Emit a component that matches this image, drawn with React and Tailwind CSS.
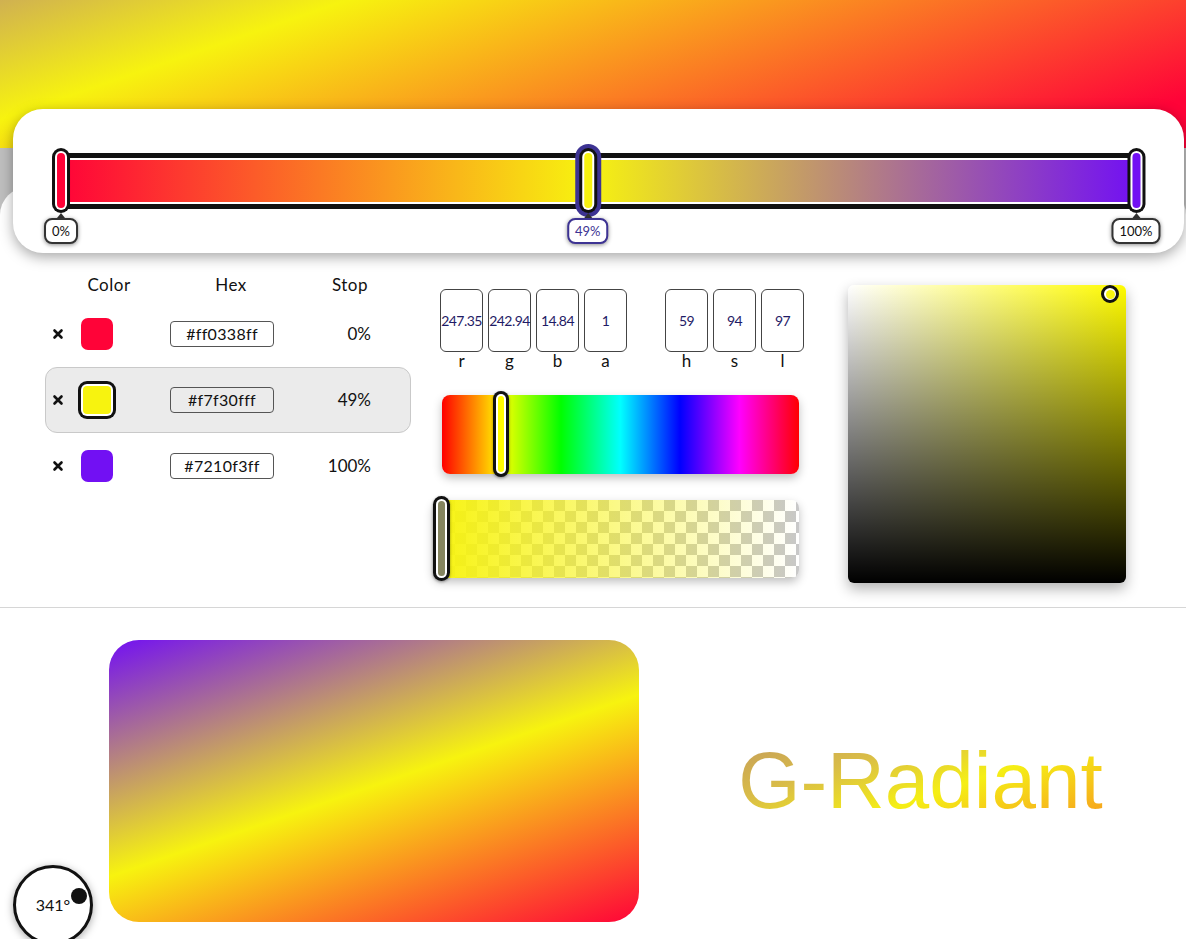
import React from 'react';

const stops = [
  { id: 1, pos: 0, hex: '#ff0338ff', fill: 'bg-[#ff0338]' },
  { id: 2, pos: 49, hex: '#f7f30fff', fill: 'bg-[#f7f30f]', selected: true },
  { id: 3, pos: 100, hex: '#7210f3ff', fill: 'bg-[#7210f3]' },
];

const rgba = [
  { label: 'r', value: '247.35' },
  { label: 'g', value: '242.94' },
  { label: 'b', value: '14.84' },
  { label: 'a', value: '1' },
];

const hsl = [
  { label: 'h', value: '59' },
  { label: 's', value: '94' },
  { label: 'l', value: '97' },
];

function Cross() {
  return (
    <svg width="12" height="12" viewBox="0 0 12 12">
      <path d="M2.5 2.5L9.5 9.5M9.5 2.5L2.5 9.5" stroke="#111" strokeWidth="2.6" strokeLinecap="round" />
    </svg>
  );
}

function StopHandle({ stop }) {
  const sel = stop.selected;
  return (
    <div
      className="absolute top-0 flex -translate-x-1/2 flex-col items-center"
      style={{ left: `${stop.pos}%` }}
    >
      <div
        className={`h-[65px] w-[18px] rounded-full bg-[#111] p-[3px] ${
          sel ? 'ring-4 ring-[#3d3393]' : ''
        }`}
      >
        <div className="h-full w-full rounded-full bg-white p-[2px]">
          <div className={`h-full w-full rounded-full ${stop.fill}`} />
        </div>
      </div>
      <div className="h-0 w-0 border-x-[4px] border-b-[5px] border-x-transparent border-b-[#333]" />
      <div
        className={`rounded-[8px] border-2 bg-white px-[6px] py-[3px] text-[13px] leading-[16px] shadow-[0_1px_4px_rgba(0,0,0,0.45)] ${
          sel ? 'border-[#3d3393] text-[#3d3393]' : 'border-[#333] text-[#111]'
        }`}
      >
        {stop.pos}%
      </div>
    </div>
  );
}

function ValueBox({ item }) {
  return (
    <div className="flex flex-col items-center">
      <div className="flex h-[63px] w-[43px] items-center justify-center rounded-[6px] border border-[#444] bg-white text-[14px] tracking-[-0.04em] text-[#1f1b66]">
        {item.value}
      </div>
      <span className="text-[17px] leading-[17px] text-[#111]">{item.label}</span>
    </div>
  );
}

function SliderHandle({ fill, className }) {
  return (
    <div className={`absolute rounded-full bg-[#111] p-[3px] shadow-[0_1px_3px_rgba(0,0,0,0.4)] ${className}`}>
      <div className="h-full w-full rounded-full bg-white p-[2px]">
        <div className={`h-full w-full rounded-full ${fill}`} />
      </div>
    </div>
  );
}

export default function App() {
  return (
    <div className="relative flex h-[939px] flex-col overflow-hidden bg-[#bfbfbf] font-['Lato',sans-serif] text-[#111]">
      {/* header gradient */}
      <div className="h-[148px] shrink-0 bg-[linear-gradient(341deg,#ff0338_9%,#f7f30f_78.5%,#d0b151_100%)]" />

      {/* gradient stops card */}
      <div className="absolute left-[13px] top-[109px] z-10 h-[144px] w-[1171px] rounded-[30px] bg-white shadow-[0_4px_14px_rgba(0,0,0,0.35)]">
        <div className="relative ml-[48px] mt-[39px] h-[65px] w-[1075px]">
          <div className="flex h-full items-center">
            <div className="h-[56px] w-full border-y-[5px] border-[#111] bg-white py-[2px]">
              <div className="h-full w-full bg-[linear-gradient(90deg,#ff0338_0%,#f7f30f_49%,#7210f3_100%)]" />
            </div>
          </div>
          {stops.map((s) => (
            <StopHandle key={s.id} stop={s} />
          ))}
        </div>
      </div>

      <main className="mt-[39px] flex-1 rounded-t-[28px] bg-white">
        {/* editor */}
        <section className="flex h-[421px] items-start border-b border-[#d6d6d6] pt-[86px]">
          {/* stops table */}
          <div className="ml-[45px] w-[366px]">
            <div className="flex h-[24px] items-center text-[17px] tracking-[0.03em]">
              <span className="ml-[19px] w-[90px] text-center">Color</span>
              <span className="w-[154px] text-center">Hex</span>
              <span className="w-[84px] text-center">Stop</span>
            </div>
            <div className="mt-[4px]">
              {stops.map((s) => (
                <div
                  key={s.id}
                  className={`flex h-[66px] items-center rounded-[12px] border ${
                    s.selected ? 'border-[#c9c9c9] bg-[#ebebeb]' : 'border-transparent'
                  }`}
                >
                  <div className="flex w-[26px] pl-[6px]">
                    <Cross />
                  </div>
                  <div className="flex w-[50px] justify-center">
                    {s.selected ? (
                      <div className="h-[38px] w-[38px] rounded-[9px] bg-[#111] p-[3px]">
                        <div className="h-full w-full rounded-[6px] bg-white p-[2px]">
                          <div className={`h-full w-full rounded-[4px] ${s.fill}`} />
                        </div>
                      </div>
                    ) : (
                      <div className={`h-[32px] w-[32px] rounded-[7px] ${s.fill}`} />
                    )}
                  </div>
                  <div className="flex w-[200px] justify-center">
                    <div className="flex h-[26px] w-[104px] items-center justify-center rounded-[4px] border border-[#555] text-[16px] tracking-[0.02em]">
                      {s.hex}
                    </div>
                  </div>
                  <div className="w-[49px] text-right text-[17px]">{s.pos}%</div>
                </div>
              ))}
            </div>
          </div>

          {/* values + sliders */}
          <div className="ml-[22px] mt-[16px] w-[369px]">
            <div className="flex pl-[7px]">
              <div className="flex gap-[5px]">
                {rgba.map((item) => (
                  <ValueBox key={item.label} item={item} />
                ))}
              </div>
              <div className="ml-[38px] flex gap-[5px]">
                {hsl.map((item) => (
                  <ValueBox key={item.label} item={item} />
                ))}
              </div>
            </div>

            <div className="relative ml-[9px] mt-[26px] h-[79px] w-[357px] rounded-[8px] bg-[linear-gradient(90deg,#f00,#ff0_16.67%,#0f0_33.33%,#0ff_50%,#00f_66.67%,#f0f_83.33%,#f00)] shadow-[0_4px_10px_rgba(0,0,0,0.25)]">
              <SliderHandle fill="bg-[#fffb00]" className="left-[51px] top-[-4px] h-[86px] w-[16px]" />
            </div>

            <div className="relative mt-[26px] h-[78px] w-[366px] rounded-[8px] bg-[conic-gradient(#c8c8c8_90deg,#fff_90deg_180deg,#c8c8c8_180deg_270deg,#fff_270deg)] bg-[length:22px_22px] shadow-[0_4px_10px_rgba(0,0,0,0.25)]">
              <div className="h-full w-full rounded-[8px] bg-[linear-gradient(90deg,rgba(247,243,15,1),rgba(247,243,15,0))]" />
              <SliderHandle fill="bg-[#85855f]" className="left-0 top-[-4px] h-[85px] w-[17px]" />
            </div>
          </div>

          {/* saturation / lightness */}
          <div className="relative ml-[46px] mt-[12px] h-[298px] w-[278px] rounded-[6px] bg-[linear-gradient(to_top,#000,transparent),linear-gradient(to_right,#fff,#fffb00)] shadow-[0_6px_14px_rgba(0,0,0,0.3)]">
            <div className="absolute left-[253px] top-0 h-[18px] w-[18px] rounded-full border-[3px] border-[#111] bg-white p-[1.5px]">
              <div className="h-full w-full rounded-full bg-[#f7f30f]" />
            </div>
          </div>
        </section>

        {/* preview */}
        <section className="flex items-center pt-[32px]">
          <div className="ml-[109px] h-[282px] w-[530px] rounded-[30px] bg-[linear-gradient(341deg,#ff0338_0%,#f7f30f_49%,#7210f3_100%)]" />
          <div className="flex flex-1 justify-center pl-[16px]">
            <h1 className="bg-[linear-gradient(341deg,#f7961f_0%,#f5ef15_42%,#d9bc48_70%,#c29a5c_100%)] bg-clip-text font-['Liberation_Sans',Arial,sans-serif] text-[80px] leading-[92px] text-transparent">
              G-Radiant
            </h1>
          </div>
        </section>
      </main>

      {/* angle knob */}
      <div className="absolute left-[13px] top-[865px] flex h-[80px] w-[80px] items-center justify-center rounded-full border-[3px] border-[#111] bg-white shadow-[0_2px_8px_rgba(0,0,0,0.35)]">
        <span className="text-[16px]">341°</span>
        <div className="absolute left-[55px] top-[20px] h-[16px] w-[16px] rounded-full bg-[#111]" />
      </div>
    </div>
  );
}
